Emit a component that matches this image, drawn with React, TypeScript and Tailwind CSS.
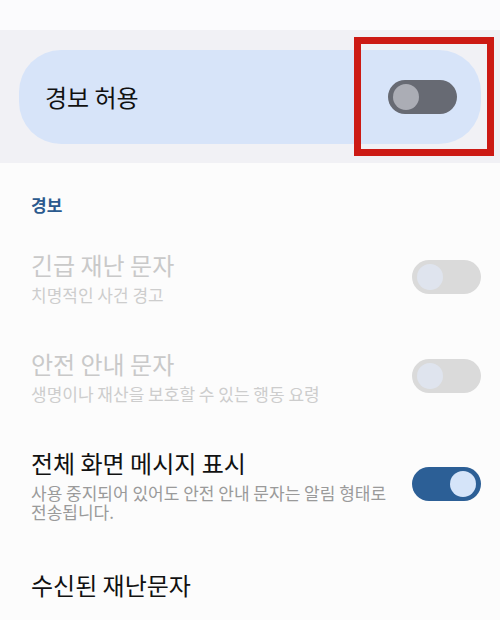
import React from 'react';

type ToggleProps = {
  on?: boolean;
  track: string;
  thumb: string;
};

const Toggle = ({ on, track, thumb }: ToggleProps) => (
  <div className={`flex h-[34px] w-[69px] shrink-0 items-center rounded-full px-[5px] ${track} ${on ? 'justify-end' : 'justify-start'}`}>
    <div className={`h-[26px] w-[26px] rounded-full ${thumb}`} />
  </div>
);

type RowProps = {
  title: string;
  sub?: string;
  disabled?: boolean;
  className?: string;
  children?: React.ReactNode;
};

const Row = ({ title, sub, disabled, className = 'py-[22px]', children }: RowProps) => (
  <div className={`flex items-center gap-4 pl-[31px] pr-[19px] ${className}`}>
    <div className="flex-1">
      <p className={`text-[24px] leading-8 ${disabled ? 'text-[#c9c9c9]' : 'text-[#111]'}`}>{title}</p>
      {sub && (
        <p className={`mt-1 break-keep text-[17px] leading-[19px] ${disabled ? 'text-[#cdcdcd]' : 'text-[#9a9a9a]'}`}>{sub}</p>
      )}
    </div>
    {children}
  </div>
);

export default function App() {
  return (
    <div
      className="relative h-[620px] w-[500px] overflow-hidden bg-[#fcfcfc]"
      style={{ fontFamily: '"Noto Sans CJK KR", "Noto Sans", sans-serif' }}
    >
      <div className="h-[30px] bg-[#fbfbfd]" />

      {/* master switch */}
      <div className="bg-[#f1f1f5] px-[19px] pb-[19px] pt-[20px]">
        <div className="flex h-[94px] items-center justify-between rounded-[42px] bg-[#d7e4f9] pl-[26px] pr-[24px]">
          <span className="text-[24px] text-[#111]">경보 허용</span>
          <Toggle track="bg-[#676a73]" thumb="bg-[#abadb5]" />
        </div>
      </div>

      <div className="pt-[30px]">
        <p className="mb-[10px] pl-[31px] text-[17px] font-bold leading-6 text-[#2b5a8e]">경보</p>

        <Row title="긴급 재난 문자" sub="치명적인 사건 경고" disabled>
          <Toggle track="bg-[#dadada]" thumb="bg-[#dfe4ee]" />
        </Row>
        <Row title="안전 안내 문자" sub="생명이나 재산을 보호할 수 있는 행동 요령" disabled>
          <Toggle track="bg-[#dadada]" thumb="bg-[#dfe4ee]" />
        </Row>
        <Row title="전체 화면 메시지 표시" sub="사용 중지되어 있어도 안전 안내 문자는 알림 형태로 전송됩니다.">
          <Toggle on track="bg-[#2c5f96]" thumb="bg-[#d5e4f9]" />
        </Row>
        <Row title="수신된 재난문자" className="pt-[26px]" />
      </div>

      {/* annotation */}
      <div className="pointer-events-none absolute left-[354px] top-[37px] h-[119px] w-[140px] border-[7px] border-[#cc1a14]" />
    </div>
  );
}
